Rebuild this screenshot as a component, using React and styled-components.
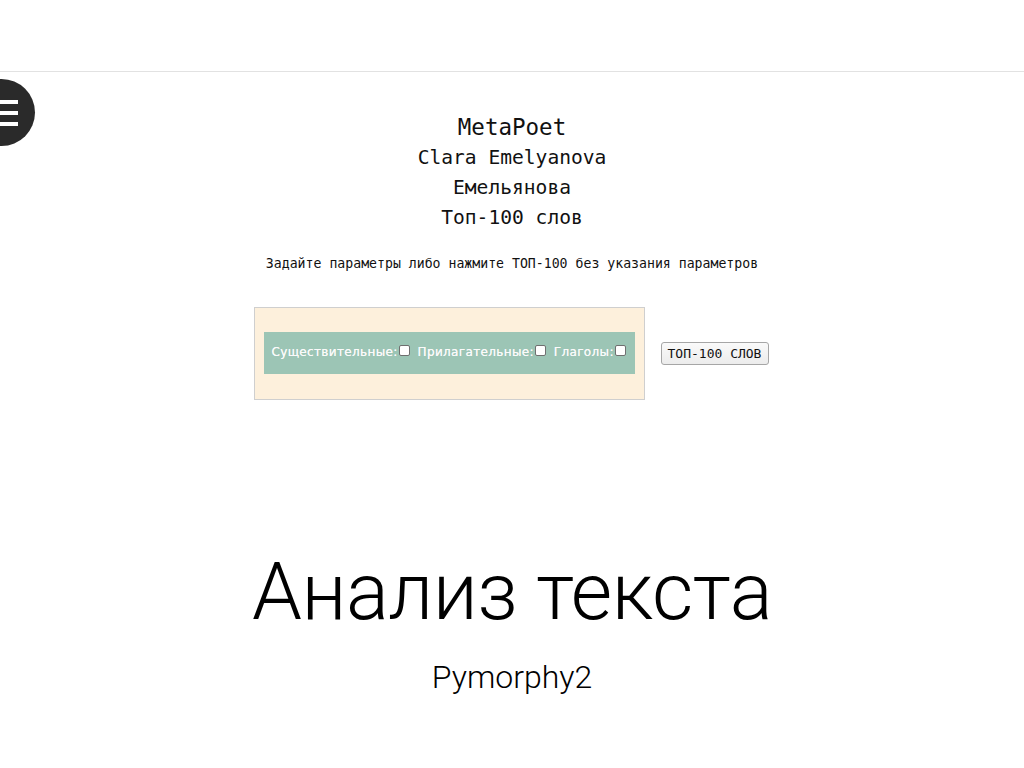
import React from "react";
import styled, { createGlobalStyle } from "styled-components";

const Global = createGlobalStyle`
  html, body { margin: 0; padding: 0; background: #ffffff; }
  body { width: 1024px; height: 768px; overflow: hidden; position: relative; }
`;

const Page = styled.div`
  width: 1024px;
  height: 768px;
  position: relative;
  overflow: hidden;
  background: #fff;
`;

const TopBar = styled.div`
  height: 71px;
  border-bottom: 1px solid #e2e2e2;
`;

const MenuButton = styled.div`
  position: absolute;
  left: -32px;
  top: 79px;
  width: 67px;
  height: 67px;
  border-radius: 50%;
  background: #2a2a2a;
  display: flex;
  flex-direction: column;
  justify-content: center;
  align-items: flex-end;
  gap: 7px;
  padding-right: 17px;
  box-sizing: border-box;
`;

const MenuLine = styled.span`
  display: block;
  width: 50px;
  height: 4px;
  background: #fff;
`;

const Content = styled.main`
  display: flex;
  flex-direction: column;
  align-items: center;
  padding-top: 40px;
  font-family: "DejaVu Sans Mono", "Liberation Mono", monospace;
  color: #111;
`;

const HeadLine = styled.div`
  font-size: ${(p) => (p.$big ? "22.5px" : "19.6px")};
  line-height: ${(p) => (p.$big ? "31px" : "30px")};
  text-align: center;
`;

const Hint = styled.p`
  margin: 21px 0 0;
  font-size: 13.2px;
  line-height: 20px;
`;

const FormRow = styled.div`
  margin-top: 33px;
  display: flex;
  align-items: center;
  gap: 16px;
  transform: translateX(-1px);
`;

const FormBox = styled.div`
  width: 391px;
  height: 93px;
  box-sizing: border-box;
  border: 1px solid #cfcfcf;
  background: #fdf0dc;
  padding: 24px 9px 0;
`;

const Filters = styled.div`
  height: 42px;
  box-sizing: border-box;
  padding: 0 0 3px 8px;
  background: #9cc5b5;
  display: flex;
  align-items: center;
  gap: 8px;
  font-family: "DejaVu Sans", Verdana, sans-serif;
  font-size: 12px;
  letter-spacing: 0.35px;
  color: #fafafa;
  text-shadow: 0 0 0.4px #fafafa;
`;

const FilterLabel = styled.label`
  display: flex;
  align-items: center;
`;

const Check = styled.span`
  display: inline-block;
  width: 9px;
  height: 9px;
  border: 1px solid #6f6f6f;
  border-radius: 2px;
  background: #fff;
  margin-left: 1px;
  margin-top: -2px;
`;

const TopButton = styled.button`
  width: 108px;
  height: 23px;
  box-sizing: border-box;
  border: 1px solid #a6a6a6;
  border-radius: 3px;
  background: linear-gradient(#fafafa, #ececec);
  font-family: "DejaVu Sans Mono", "Liberation Mono", monospace;
  font-size: 13px;
  color: #111;
  padding: 0;
`;

const SlideTitle = styled.h1`
  margin: 152px 0 0;
  font-family: Roboto, "Liberation Sans", sans-serif;
  font-weight: 300;
  font-size: 80px;
  line-height: 80px;
  color: #000;
  letter-spacing: -0.5px;
`;

const SlideSub = styled.div`
  margin-top: 27px;
  font-family: Roboto, "Liberation Sans", sans-serif;
  font-weight: 300;
  font-size: 32px;
  line-height: 36px;
  color: #000;
`;

const filters = ["Существительные:", "Прилагательные:", "Глаголы:"];

export default function App() {
  return (
    <Page>
      <Global />
      <TopBar />
      <MenuButton>
        <MenuLine />
        <MenuLine />
        <MenuLine />
      </MenuButton>
      <Content>
        <HeadLine $big>MetaPoet</HeadLine>
        <HeadLine>Clara Emelyanova</HeadLine>
        <HeadLine>Емельянова</HeadLine>
        <HeadLine>Топ-100 слов</HeadLine>
        <Hint>Задайте параметры либо нажмите ТОП-100 без указания параметров</Hint>
        <FormRow>
          <FormBox>
            <Filters>
              {filters.map((f) => (
                <FilterLabel key={f}>
                  {f}
                  <Check />
                </FilterLabel>
              ))}
            </Filters>
          </FormBox>
          <TopButton>ТОП-100 СЛОВ</TopButton>
        </FormRow>
        <SlideTitle>Анализ текста</SlideTitle>
        <SlideSub>Pymorphy2</SlideSub>
      </Content>
    </Page>
  );
}
